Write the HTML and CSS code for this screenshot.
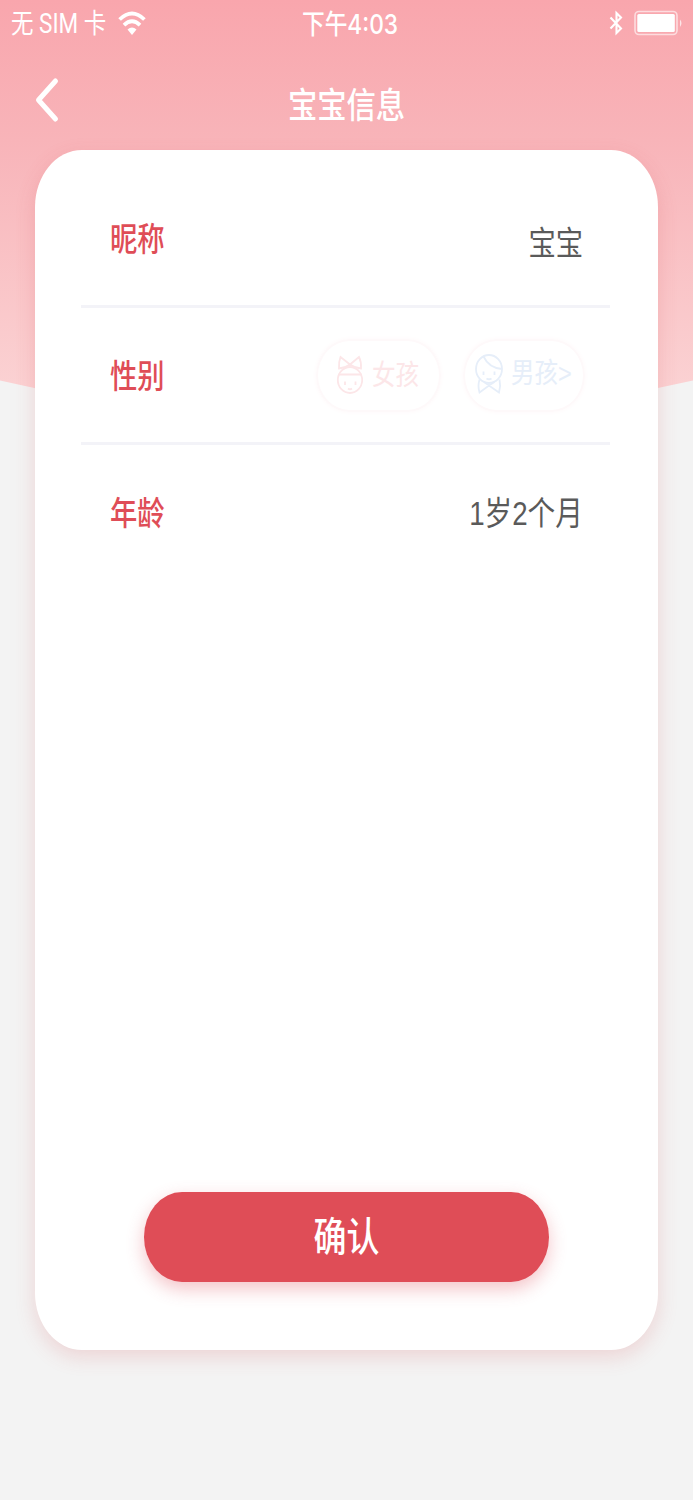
FILE: index.html
```html
<!DOCTYPE html>
<html lang="zh-CN">
<head>
  <meta charset="UTF-8">
  <title>宝宝信息</title>
  <meta name="viewport" content="width=device-width, initial-scale=1.0">
  <link rel="stylesheet" href="styles.css">
</head>
<body>
  <div class="screen">
    <svg class="backdrop" viewBox="0 0 693 440" aria-hidden="true">
      <defs>
        <linearGradient id="pink" x1="0" y1="0" x2="0" y2="400" gradientUnits="userSpaceOnUse">
          <stop offset="0" stop-color="#f9a6ad" />
          <stop offset="0.35" stop-color="#f8b4b9" />
          <stop offset="1" stop-color="#fbd3d4" />
        </linearGradient>
      </defs>
      <path d="M0 0H693V380.500Q346.500 460 0 380.500Z" fill="url(#pink)" />
    </svg>

    <div class="status-bar">
      <div class="status-left">
        <span class="tall">无 SIM 卡</span>
        <svg class="wifi" width="28" height="25" viewBox="0 0 28 25">
          <g fill="none" stroke="#fff" stroke-width="3.800">
            <path d="M1.600 8.500Q14 -3.500 26.400 8.500" />
            <path d="M6 14.200Q14 6.500 22 14.200" />
          </g>
          <path d="M9.500 18.500Q14 14.500 18.500 18.500L14 24Z" fill="#fff" />
        </svg>
      </div>
      <span class="status-time tall">下午4:03</span>
      <div class="status-right">
        <svg width="14" height="26" viewBox="0 0 14 26" fill="none" stroke="#fff" stroke-width="2.100">
          <path d="M1.500 7.500L12 18.500L7.500 23V3L12 7.500L1.500 18.500" />
        </svg>
        <svg width="49" height="26" viewBox="0 0 49 26">
          <rect x="1" y="1.500" width="42" height="23" rx="4" fill="none" stroke="#fff" stroke-opacity="0.600" stroke-width="1.600" />
          <rect x="3.300" y="4" width="37.500" height="18" rx="1.500" fill="#fff" />
          <path d="M46 9.500Q49 13 46 17Z" fill="#fff" fill-opacity="0.700" />
        </svg>
      </div>
    </div>

    <header class="nav">
      <svg class="back" width="26" height="46" viewBox="0 0 26 46" fill="none" stroke="#fff" stroke-width="5" stroke-linecap="round" stroke-linejoin="round">
        <path d="M21.500 4L4.500 23L21.500 42" />
      </svg>
      <h1><span class="tall">宝宝信息</span></h1>
    </header>

    <main class="card">
      <div class="row">
        <span class="label tall">昵称</span>
        <span class="value name tall">宝宝</span>
      </div>
      <div class="row">
        <span class="label tall">性别</span>
        <div class="genders">
          <div class="pill girl">
            <svg width="28" height="42" viewBox="0 0 28 42" fill="none" stroke="currentColor" stroke-width="1.800">
              <ellipse cx="15" cy="26" rx="12.200" ry="13" />
              <path d="M3.500 20.500H26.500M15 10.500L5.500 3Q3.500 8 4 14.500Q10 14 15 10.500ZM15 10.500L24 3Q26.500 8 26 14.500Q20 14 15 10.500Z" />
              <path d="M10 27.500V31M20.500 27.500V31" />
              <path d="M13 34.500Q15 36 17 34.500" />
            </svg>
            <span class="tall">女孩</span>
          </div>
          <div class="pill boy">
            <svg width="30" height="42" viewBox="0 0 30 42" fill="none" stroke="currentColor" stroke-width="1.800">
              <ellipse cx="15" cy="15" rx="13" ry="14" />
              <path d="M9.500 2.500Q15 14 28 15" />
              <path d="M9.500 17.500V21M20.500 17.500V21" />
              <path d="M12.500 24.500Q15 26 17.500 24.500" />
              <path d="M5.500 25.500Q3.500 32 5.500 38.500L15 31.500L25 38.500Q27 32 25.500 25.500M10 28L15 31.500L20.500 28" />
            </svg>
            <span class="tall">男孩&gt;</span>
          </div>
        </div>
      </div>
      <div class="row">
        <span class="label tall">年龄</span>
        <span class="value age tall">1岁2个月</span>
      </div>
      <button class="confirm" type="button"><span class="tall">确认</span></button>
    </main>
  </div>
</body>
</html>
```
FILE: styles.css
```css
:root {
  --red: #df4d57;
  --page-bg: #f3f3f3;
  --line: #f3f3f8;
  --text: #5a5a5a;
}

* {
  box-sizing: border-box;
}

body {
  margin: 0;
  background: var(--page-bg);
  font-family: Inter, "Noto Sans CJK SC", sans-serif;
}

svg {
  display: block;
  flex: none;
}

.screen {
  position: relative;
  height: 1500px;
  display: flex;
  flex-direction: column;
  overflow: hidden;
}

.backdrop {
  position: absolute;
  top: 0;
  left: 0;
  width: 693px;
  height: 440px;
}

/* tall, narrow lettering */
.tall {
  display: inline-block;
  line-height: 1;
  white-space: nowrap;
  transform: scaleY(1.2);
}

.status-bar {
  position: relative;
  height: 46px;
  padding: 0 10px 0 11px;
  display: grid;
  grid-template-columns: 1fr auto 1fr;
  align-items: center;
  color: #fff;
  font-size: 22.7px;
}

.status-left,
.status-right {
  display: flex;
  align-items: center;
}

.status-left {
  gap: 10px;
}

.status-left .tall {
  width: 97px;
  padding-top: 1px;
  font-family: Roboto, "Noto Sans CJK SC", sans-serif;
  font-size: 22.5px;
}

.status-time {
  margin-left: 6px;
  padding-top: 2px;
  font-weight: 500;
}

.status-right {
  justify-content: flex-end;
  gap: 11px;
}

.nav {
  position: relative;
  height: 104px;
  display: flex;
  align-items: center;
}

.back {
  margin: 4px 0 0 34px;
}

.nav h1 {
  flex: 1;
  margin: 16px 60px 0 0;
  text-align: center;
  color: #fff;
  font-size: 29.3px;
  font-weight: 500;
  line-height: 1;
}

.card {
  position: relative;
  width: 623px;
  height: 1200px;
  margin-left: 35px;
  padding: 21px 48px 68px 46px;
  display: flex;
  flex-direction: column;
  background: #fff;
  border-radius: 47px / 57px;
  box-shadow: 0 7px 20px rgba(210, 70, 80, 0.18);
}

.row {
  height: 137px;
  padding: 0 28px 0 29px;
  display: flex;
  align-items: center;
  justify-content: space-between;
  border-bottom: 3px solid var(--line);
}

.row:nth-child(3) {
  border-bottom: none;
}

.label {
  padding-top: 3px;
  color: var(--red);
  font-size: 27.3px;
  font-weight: 500;
}

.value {
  color: var(--text);
  font-size: 27.3px;
}

.name {
  margin-right: -1px;
  padding-top: 10px;
}

.age {
  margin-right: -1px;
  font-family: "Liberation Sans", "Noto Sans CJK SC", sans-serif;
  font-size: 27.7px;
}

.row:nth-child(3) .label {
  padding-top: 0;
}

.genders {
  display: flex;
  gap: 22px;
  margin-right: -3px;
}

.pill {
  height: 73px;
  display: flex;
  align-items: center;
  border: 2px solid #fef9fa;
  border-radius: 34px / 37px;
  box-shadow: 0 0 5px #fef8f9;
  font-size: 23.5px;
}

.girl {
  width: 125px;
  padding-left: 17px;
  gap: 9px;
  color: #fce6e8;
}

.boy {
  width: 122px;
  padding-left: 9px;
  gap: 7px;
  color: #e6eef9;
  font-family: "Liberation Sans", "Noto Sans CJK SC", sans-serif;
}

.confirm {
  width: 405px;
  height: 90px;
  margin: auto auto 0 63px;
  padding: 0;
  border: none;
  border-radius: 38px / 45px;
  background: var(--red);
  box-shadow: 0 7px 18px rgba(223, 77, 87, 0.33);
  color: #fff;
  font-family: inherit;
  font-size: 33px;
  font-weight: 500;
  cursor: pointer;
}
```
